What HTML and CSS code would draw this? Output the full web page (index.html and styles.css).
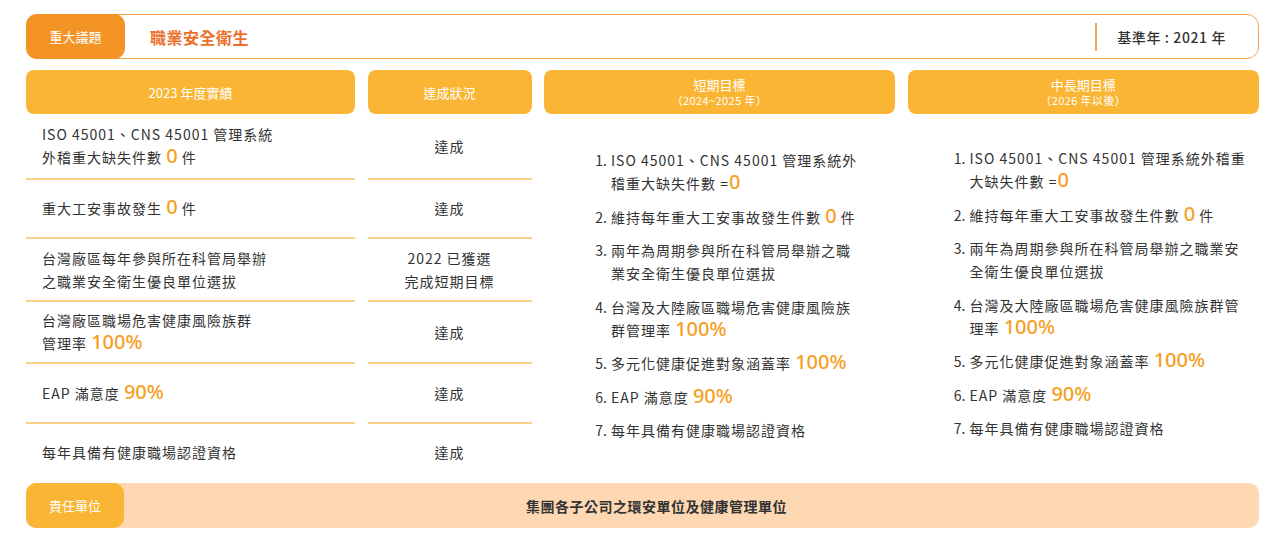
FILE: index.html
```html
<!DOCTYPE html>
<html lang="zh-Hant">
<head>
<meta charset="utf-8">
<link rel="stylesheet" href="styles.css">
</head>
<body>
<div class="page">
  <div class="topbar">
    <div class="tag tag-orange">重大議題</div>
    <div class="topic">職業安全衛生</div>
    <div class="baseyear">基準年 : 2021 年</div>
  </div>

  <div class="grid">
    <div class="head c1">2023 年度實績</div>
    <div class="head c2">達成狀況</div>
    <div class="head c3"><span>短期目標</span><span class="sub">（2024~2025 年）</span></div>
    <div class="head c4"><span>中長期目標</span><span class="sub">（2026 年以後）</span></div>

    <div class="cell perf r1"><p>ISO 45001、CNS 45001 管理系統<br>外稽重大缺失件數 <b class="hl">0</b> 件</p></div>
    <div class="cell stat r1"><p>達成</p></div>
    <div class="cell perf r2"><p>重大工安事故發生 <b class="hl">0</b> 件</p></div>
    <div class="cell stat r2"><p>達成</p></div>
    <div class="cell perf r3"><p>台灣廠區每年參與所在科管局舉辦<br>之職業安全衛生優良單位選拔</p></div>
    <div class="cell stat r3"><p>2022 已獲選<br>完成短期目標</p></div>
    <div class="cell perf r4"><p>台灣廠區職場危害健康風險族群<br>管理率 <b class="hl">100%</b></p></div>
    <div class="cell stat r4"><p>達成</p></div>
    <div class="cell perf r5"><p>EAP 滿意度 <b class="hl">90%</b></p></div>
    <div class="cell stat r5"><p>達成</p></div>
    <div class="cell perf r6 last"><p>每年具備有健康職場認證資格</p></div>
    <div class="cell stat r6 last"><p>達成</p></div>

    <div class="goals g-short">
      <ol class="list short">
        <li>ISO 45001、CNS 45001 管理系統外<br>稽重大缺失件數 =<b class="hl">0</b></li>
        <li>維持每年重大工安事故發生件數 <b class="hl">0</b> 件</li>
        <li>兩年為周期參與所在科管局舉辦之職<br>業安全衛生優良單位選拔</li>
        <li>台灣及大陸廠區職場危害健康風險族<br>群管理率 <b class="hl">100%</b></li>
        <li>多元化健康促進對象涵蓋率 <b class="hl">100%</b></li>
        <li>EAP 滿意度 <b class="hl">90%</b></li>
        <li>每年具備有健康職場認證資格</li>
      </ol>
    </div>
    <div class="goals g-long">
      <ol class="list long">
        <li>ISO 45001、CNS 45001 管理系統外稽重<br>大缺失件數 =<b class="hl">0</b></li>
        <li>維持每年重大工安事故發生件數 <b class="hl">0</b> 件</li>
        <li>兩年為周期參與所在科管局舉辦之職業安<br>全衛生優良單位選拔</li>
        <li>台灣及大陸廠區職場危害健康風險族群管<br>理率 <b class="hl">100%</b></li>
        <li>多元化健康促進對象涵蓋率 <b class="hl">100%</b></li>
        <li>EAP 滿意度 <b class="hl">90%</b></li>
        <li>每年具備有健康職場認證資格</li>
      </ol>
    </div>
  </div>

  <div class="bottombar">
    <div class="tag tag-yellow">責任單位</div>
    <div class="unit">集團各子公司之環安單位及健康管理單位</div>
  </div>
</div>
</body>
</html>
```

FILE: styles.css
```css
* { box-sizing: border-box; }
html, body { margin: 0; padding: 0; background: #fff; }
body {
  font-family: "Noto Sans CJK TC", "Noto Sans", sans-serif;
  color: #333;
}
.page {
  width: 1285px;
  padding: 14px 26px 0 26px;
}
.topbar {
  display: flex;
  align-items: center;
  height: 45px;
  border: 1px solid #F5A455;
  border-radius: 12px;
}
.tag {
  width: 98px;
  height: 100%;
  display: flex;
  align-items: center;
  justify-content: center;
  color: #fff;
  font-size: 13px;
  border-radius: 11px;
  flex: none;
}
.topbar .tag { margin: -1px 0 -1px -1px; height: 45px; width: 99px; }
.tag-orange { background: #F39324; }
.tag-yellow { background: #FBB534; }
.topic {
  flex: 1;
  padding-left: 25px;
  font-size: 16px;
  font-weight: 700;
  color: #EC6F2C;
  letter-spacing: 0.5px;
}
.baseyear {
  border-left: 2px solid #F5A455;
  height: 28px;
  line-height: 28px;
  padding: 0 32px 0 20px;
  font-size: 14px;
  font-weight: 500;
  letter-spacing: 0.6px;
  color: #333;
}

.grid {
  margin-top: 11px;
  display: grid;
  grid-template-columns: 329px 164px 351px 1fr;
  grid-template-rows: 44px 66px 59px 63px 62px 60px 57px;
  column-gap: 12.5px;
}
.head {
  background: #FBB534;
  border-radius: 8px;
  color: #fff;
  font-size: 13px;
  display: flex;
  flex-direction: column;
  align-items: center;
  justify-content: center;
  line-height: 17px;
}
.head .sub { font-size: 11px; line-height: 15px; letter-spacing: 0.4px; }
.c1 { grid-column: 1; }
.c2 { grid-column: 2; }
.c3 { grid-column: 3; }
.c4 { grid-column: 4; }

.cell {
  font-size: 14px;
  letter-spacing: 1px;
  line-height: 23px;
  display: flex;
  align-items: center;
  border-bottom: 2px solid #F9D08C;
}
.cell p { margin: 0; }
.cell.last { border-bottom: none; }
.perf { grid-column: 1; padding-left: 16px; }
.stat { grid-column: 2; justify-content: center; text-align: center; }
.r1 { grid-row: 2; }
.r2 { grid-row: 3; }
.r3 { grid-row: 4; }
.r4 { grid-row: 5; }
.r5 { grid-row: 6; }
.r6 { grid-row: 7; }

.hl {
  font-family: "Noto Sans", sans-serif;
  font-weight: 500;
  font-size: 20px;
  line-height: 0;
  color: #F5A024;
  letter-spacing: 0;
}

.goals {
  grid-row: 2 / 8;
  display: flex;
  align-items: center;
}
.g-short { grid-column: 3; padding-left: 50px; padding-bottom: 4px; }
.g-long { grid-column: 4; padding-left: 45px; padding-bottom: 8px; }
.list {
  margin: 0;
  padding: 0 0 0 16px;
  font-size: 14px;
  letter-spacing: 1px;
  line-height: 23px;
  white-space: nowrap;
}
.list li { margin-bottom: 10.5px; padding-left: 1px; }
.list li:last-child { margin-bottom: 0; }
.list li::marker { letter-spacing: 0; }

.bottombar {
  margin-top: 2px;
  height: 45px;
  display: flex;
  align-items: center;
  background: #FDD8B3;
  border-radius: 10px;
}
.bottombar .tag { border-radius: 10px; }
.unit {
  flex: 1;
  text-align: center;
  padding-right: 70px;
  font-size: 14px;
  font-weight: 700;
  color: #333;
  letter-spacing: 0.5px;
}
```
